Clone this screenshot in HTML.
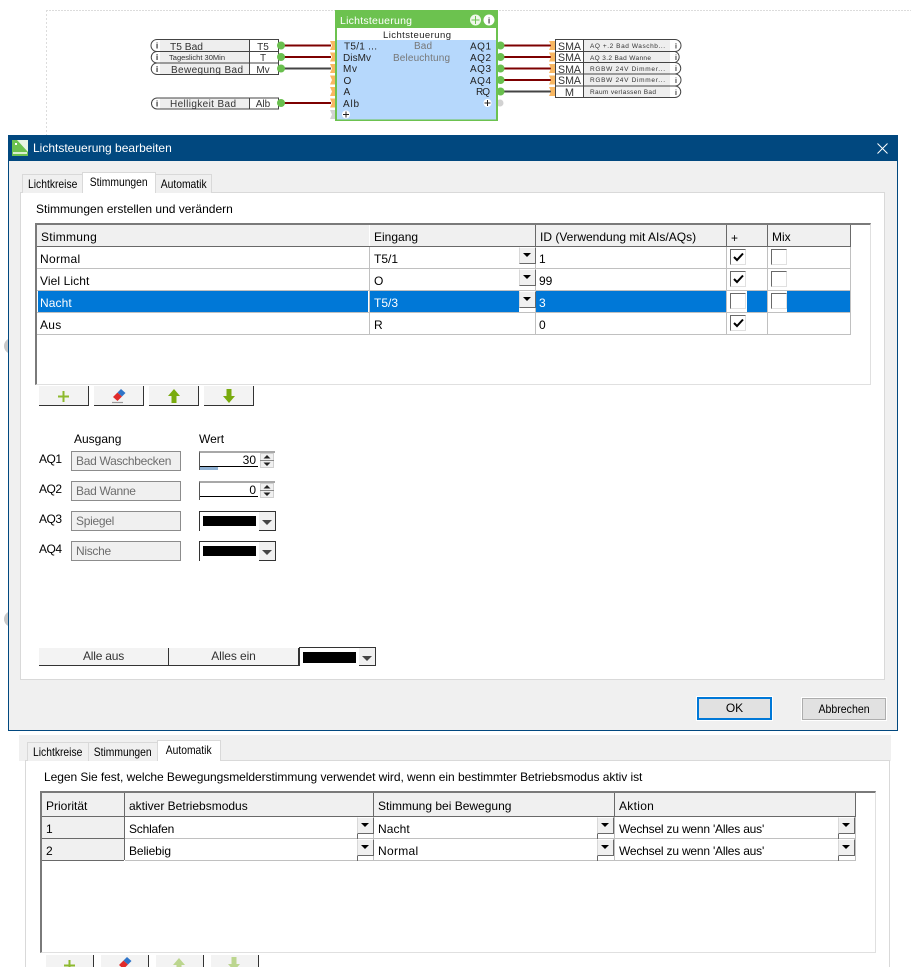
<!DOCTYPE html>
<html lang="de">
<head>
<meta charset="utf-8">
<title>Lichtsteuerung bearbeiten</title>
<style>
html,body{margin:0;padding:0;background:#fff;width:911px;height:967px;overflow:hidden}
body{position:relative;font-family:"Liberation Sans",sans-serif;font-size:12px;color:#000}
div{position:absolute;box-sizing:border-box}
.t{white-space:nowrap;line-height:14px}
.w{color:#fff}
.hd{background:#f0f0f0}
.hl{height:1px;background:#c0c0c0}
.vl{width:1px;background:#c0c0c0}
.dk{background:#696969}
.tab{background:#f0f0f0;border:1px solid #d9d9d9;border-bottom:0;text-align:center;line-height:18px;white-space:nowrap}
.tab span{display:inline-block;transform:scaleX(.86)}
.tab.on{background:#fff}
.c{width:17px;height:17px;background:#f0f0f0;border-top:1px solid #fff;border-right:1px solid #696969;border-bottom:1px solid #696969;border-left:1px solid #d8d8d8}
.c::after{content:"";position:absolute;left:3px;top:5px;border:4px solid transparent;border-top:4px solid #000;border-bottom:0}
.cb{width:16px;height:16px;background:#fff;border-top:1px solid #696969;border-left:1px solid #696969;border-right:1px solid #e0e0e0;border-bottom:1px solid #e0e0e0}
.b{height:20px;width:50px;background:#f3f3f3;border-right:1px solid #333;border-bottom:1px solid #333}
.i{width:110px;height:20px;background:#f0f0f0;border:1px solid #8c8c8c;color:#6d6d6d;line-height:18px;padding-left:4px;letter-spacing:-.3px;white-space:nowrap}
.cc{width:77px;height:20px;background:#fff;border-top:1px solid #333;border-left:1px solid #333}
.blk{background:#000}
svg{position:absolute;display:block;overflow:visible}
</style>
</head>
<body>

<!-- logic diagram -->
<svg style="left:0;top:0" width="911" height="135" viewBox="0 0 911 135" font-family="Liberation Sans, sans-serif">
  <path d="M46 10.5H911" stroke="#dcdcdc" stroke-dasharray="2 1"/>
  <path d="M46.5 10V135" stroke="#dcdcdc" stroke-dasharray="2 2"/>

  <!-- wires -->
  <g stroke="#7d0000" stroke-width="2">
    <path d="M284 45.5H331M284 57H331M284 103H331"/>
    <path d="M503 45.5H552M503 57H552M503 68.5H552M503 80H552"/>
  </g>
  <g stroke="#444" stroke-width="2"><path d="M284 68.5H331M503 91.5H552"/></g>

  <!-- input boxes -->
  <g stroke="#444" fill="#fff">
    <path d="M157 39.5H278.5V51.5H157A6 6 0 0 1 157 39.5Z"/>
    <path d="M157 51.5H278.5V63H157A5.750 5.750 0 0 1 157 51.5Z"/>
    <path d="M157 63H278.5V74.5H157A5.750 5.750 0 0 1 157 63Z"/>
    <path d="M157 98H278.5V109H157A5.500 5.500 0 0 1 157 98Z"/>
  </g>
  <g fill="#eee">
    <rect x="160" y="40" width="89" height="11"/>
    <rect x="160" y="52" width="89" height="10.500"/>
    <rect x="160" y="63.500" width="89" height="10.500"/>
    <rect x="160" y="98.500" width="89" height="10"/>
  </g>
  <path d="M249.500 39.500V74.500M249.500 98V109" stroke="#444"/>
  <g font-size="8.500" font-weight="bold" fill="#333" text-anchor="middle">
    <text x="157" y="48.500">i</text><text x="157" y="60">i</text><text x="157" y="72">i</text><text x="157" y="106.500">i</text>
  </g>
  <g font-size="10" fill="#333">
    <text x="170" y="50" textLength="33" lengthAdjust="spacingAndGlyphs">T5 Bad</text>
    <text x="169" y="60" font-size="7" textLength="56" lengthAdjust="spacingAndGlyphs">Tageslicht 30Min</text>
    <text x="171" y="73" textLength="72" lengthAdjust="spacing">Bewegung Bad</text>
    <text x="170" y="107" textLength="66" lengthAdjust="spacing">Helligkeit Bad</text>
  </g>
  <g font-size="10" fill="#333" text-anchor="middle">
    <text x="263" y="50">T5</text><text x="263" y="61">T</text><text x="263" y="73">Mv</text><text x="263" y="107">Alb</text>
  </g>
  <g fill="#69bf4e">
    <circle cx="281" cy="45.500" r="4"/><circle cx="281" cy="57" r="4"/><circle cx="281" cy="68.500" r="4"/><circle cx="281" cy="103" r="4"/>
    <circle cx="500.500" cy="45.500" r="4"/><circle cx="500.500" cy="57" r="4"/><circle cx="500.500" cy="68.500" r="4"/><circle cx="500.500" cy="80" r="4"/><circle cx="500.500" cy="91.500" r="4"/>
  </g>
  <circle cx="500" cy="103" r="3.500" fill="#d2d2d2"/>

  <!-- function block -->
  <rect x="335" y="10" width="163" height="111" fill="#6cc24f"/>
  <rect x="337" y="28" width="159" height="12" fill="#fff"/>
  <rect x="337" y="40" width="159" height="79.500" fill="#b6d8fc"/>
  <text x="340" y="24" font-size="10.500" fill="#fff" textLength="72" lengthAdjust="spacing">Lichtsteuerung</text>
  <circle cx="475.500" cy="20" r="5.500" fill="#eef7ea"/>
  <path d="M475.500 16V24M471.500 20H479.500" stroke="#6cc24f"/>
  <circle cx="489" cy="20" r="5.500" fill="#fff"/>
  <text x="489" y="23.500" font-size="8.500" font-weight="bold" fill="#444" text-anchor="middle">i</text>
  <text x="383" y="38" font-size="9.500" fill="#222" textLength="68" lengthAdjust="spacing">Lichtsteuerung</text>
  <g font-size="10" fill="#222">
    <text x="344" y="49.500" textLength="33" lengthAdjust="spacing">T5/1 ...</text>
    <text x="343" y="61" textLength="28" lengthAdjust="spacing">DisMv</text>
    <text x="343" y="72" textLength="14" lengthAdjust="spacing">Mv</text>
    <text x="343.500" y="84">O</text>
    <text x="343.500" y="95">A</text>
    <text x="343" y="107" textLength="16" lengthAdjust="spacing">Alb</text>
    <text x="470" y="49.500" textLength="21" lengthAdjust="spacing">AQ1</text>
    <text x="470" y="61" textLength="21" lengthAdjust="spacing">AQ2</text>
    <text x="470" y="72" textLength="21" lengthAdjust="spacing">AQ3</text>
    <text x="470" y="84" textLength="21" lengthAdjust="spacing">AQ4</text>
    <text x="476" y="95" textLength="14" lengthAdjust="spacing">RQ</text>
  </g>
  <g font-size="10" fill="#777">
    <text x="414" y="49" textLength="18" lengthAdjust="spacing">Bad</text>
    <text x="393" y="61" textLength="57" lengthAdjust="spacing">Beleuchtung</text>
  </g>
  <g>
    <circle cx="487.500" cy="103" r="4" fill="#fff"/><path d="M484.500 103H490.500M487.500 100V106" stroke="#222"/>
    <circle cx="346" cy="114.500" r="4" fill="#fff"/><path d="M343 114.500H349M346 111.500V117.500" stroke="#222"/>
  </g>

  <!-- orange ports -->
  <g fill="#f8b762">
    <path d="M330 41H335V50H330L332 45.500Z"/><path d="M330 52.500H335V61.500H330L332 57Z"/><path d="M330 64H335V73H330L332 68.500Z"/><path d="M330 75.500H335V84.500H330L332 80Z"/><path d="M330 87H335V96H330L332 91.500Z"/><path d="M330 98.500H335V107.500H330L332 103Z"/>
    <path d="M549 41H555V50H549L551 45.500Z"/><path d="M549 52.500H555V61.500H549L551 57Z"/><path d="M549 64H555V73H549L551 68.500Z"/><path d="M549 75.500H555V84.500H549L551 80Z"/><path d="M549 87H555V96H549L551 91.500Z"/>
  </g>
  <path d="M330 110H335V119H330L332 114.500Z" fill="#d2d2d2"/>

  <!-- output boxes -->
  <g stroke="#444" fill="#fff">
    <path d="M555.500 39.500H675A6 6 0 0 1 675 51.500H555.500Z"/>
    <path d="M555.500 51.500H675A5.700 5.700 0 0 1 675 62.500H555.500Z"/>
    <path d="M555.500 62.500H675A5.700 5.700 0 0 1 675 74H555.500Z"/>
    <path d="M555.500 74H675A5.700 5.700 0 0 1 675 86H555.500Z"/>
    <path d="M555.500 86H675A5.700 5.700 0 0 1 675 97.500H555.500Z"/>
  </g>
  <g fill="#eee">
    <rect x="584" y="40" width="86" height="11"/><rect x="584" y="52" width="86" height="10"/><rect x="584" y="63" width="86" height="10.500"/><rect x="584" y="74.500" width="86" height="11"/><rect x="584" y="86.500" width="86" height="10.500"/>
  </g>
  <path d="M583.500 39.500V97.500" stroke="#444"/>
  <g font-size="11" fill="#333">
    <text x="558" y="50" textLength="23" lengthAdjust="spacingAndGlyphs">SMA</text>
    <text x="558" y="61" textLength="23" lengthAdjust="spacingAndGlyphs">SMA</text>
    <text x="558" y="73" textLength="23" lengthAdjust="spacingAndGlyphs">SMA</text>
    <text x="558" y="84" textLength="23" lengthAdjust="spacingAndGlyphs">SMA</text>
    <text x="569.500" y="96" text-anchor="middle">M</text>
  </g>
  <g font-size="6.500" fill="#333">
    <text x="590" y="48" textLength="75" lengthAdjust="spacing">AQ +.2 Bad Waschb...</text>
    <text x="590" y="60" textLength="61" lengthAdjust="spacing">AQ 3.2 Bad Wanne</text>
    <text x="590" y="71" textLength="75" lengthAdjust="spacing">RGBW 24V Dimmer...</text>
    <text x="590" y="82" textLength="75" lengthAdjust="spacing">RGBW 24V Dimmer...</text>
    <text x="590" y="94" textLength="66" lengthAdjust="spacing">Raum verlassen Bad</text>
  </g>
  <g font-size="7" font-weight="bold" fill="#333" text-anchor="middle">
    <text x="676" y="48.500">i</text><text x="676" y="60">i</text><text x="676" y="71">i</text><text x="676" y="83">i</text><text x="676" y="95">i</text>
  </g>
</svg>

<!-- grey stubs behind dialog -->
<div style="left:4px;top:338px;width:8px;height:16px;border-radius:8px 0 0 8px;background:#c8c8c8"></div>
<div style="left:4px;top:611px;width:8px;height:16px;border-radius:8px 0 0 8px;background:#c8c8c8"></div>

<!-- dialog -->
<div style="left:8px;top:135px;width:890px;height:596px;background:#f0f0f0;border:1px solid #01487f"></div>
<div style="left:8px;top:135px;width:890px;height:26px;background:#01487f"></div>
<svg style="left:12px;top:140px" width="16" height="16" viewBox="0 0 16 16">
  <rect width="16" height="16" fill="#6cc24f"/>
  <path d="M5 0H16V12Z" fill="#e9f5e3"/>
  <rect x="3" y="3" width="2" height="2" fill="#fff"/>
  <rect x="1" y="12" width="14" height="2" fill="#d8efcf"/>
</svg>
<div class="t w" style="left:33px;top:141px">Lichtsteuerung bearbeiten</div>
<svg style="left:877px;top:143px" width="11" height="11" viewBox="0 0 11 11"><path d="M.5 .5L10.500 10.500M10.500 .5L.5 10.500" stroke="#fff" stroke-width="1"/></svg>

<!-- tab page -->
<div style="left:20px;top:192px;width:865px;height:488px;background:#fff;border:1px solid #d9d9d9"></div>
<div class="tab" style="left:22px;top:174px;width:61px;height:19px"><span>Lichtkreise</span></div>
<div class="tab on" style="left:82px;top:172px;width:74px;height:21px;line-height:19px"><span>Stimmungen</span></div>
<div class="tab" style="left:155px;top:174px;width:57px;height:19px"><span>Automatik</span></div>
<div class="t" style="left:36px;top:202px">Stimmungen erstellen und verändern</div>

<!-- table 1 -->
<div style="left:35px;top:223px;width:836px;height:162px;background:#fff;border-top:2px solid #7a7a7a;border-left:2px solid #7a7a7a;border-right:1px solid #e0e0e0;border-bottom:1px solid #e0e0e0"></div>
<div class="hd" style="left:37px;top:225px;width:814px;height:21px"></div>
<div class="dk" style="left:37px;top:246px;width:814px;height:1px"></div>
<div class="vl" style="left:369px;top:225px;height:21px;background:#fff"></div>
<div class="dk" style="left:535px;top:225px;width:1px;height:21px"></div>
<div class="dk" style="left:726px;top:225px;width:1px;height:21px"></div>
<div class="dk" style="left:767px;top:225px;width:1px;height:21px"></div>
<div class="dk" style="left:850px;top:225px;width:1px;height:21px"></div>
<div class="t" style="left:41px;top:230px;letter-spacing:.25px">Stimmung</div>
<div class="t" style="left:374px;top:230px">Eingang</div>
<div class="t" style="left:540px;top:230px">ID (Verwendung mit AIs/AQs)</div>
<div class="t" style="left:731px;top:231px">+</div>
<div class="t" style="left:772px;top:230px">Mix</div>

<!-- selected row -->
<div style="left:38px;top:291px;width:330px;height:21px;background:#0078d7"></div>
<div style="left:370px;top:291px;width:149px;height:21px;background:#0078d7"></div>
<div style="left:536px;top:291px;width:190px;height:21px;background:#0078d7"></div>
<div style="left:747px;top:291px;width:20px;height:21px;background:#0078d7"></div>
<div style="left:787px;top:291px;width:63px;height:21px;background:#0078d7"></div>

<!-- grid lines -->
<div class="hl" style="left:37px;top:268px;width:814px"></div>
<div class="hl" style="left:37px;top:290px;width:814px"></div>
<div class="hl" style="left:37px;top:312px;width:814px"></div>
<div class="hl" style="left:37px;top:334px;width:814px"></div>
<div class="vl" style="left:369px;top:247px;height:88px"></div>
<div class="vl" style="left:535px;top:247px;height:88px"></div>
<div class="vl" style="left:726px;top:247px;height:88px"></div>
<div class="vl" style="left:767px;top:247px;height:88px"></div>
<div class="vl" style="left:850px;top:247px;height:88px"></div>

<div class="t" style="left:40px;top:252px;letter-spacing:.3px">Normal</div>
<div class="t" style="left:40px;top:274px;letter-spacing:.1px">Viel Licht</div>
<div class="t w" style="left:40px;top:296px;letter-spacing:.1px">Nacht</div>
<div class="t" style="left:40px;top:318px;letter-spacing:.3px">Aus</div>
<div class="t" style="left:374px;top:252px">T5/1</div>
<div class="t" style="left:374px;top:274px">O</div>
<div class="t w" style="left:374px;top:296px">T5/3</div>
<div class="t" style="left:374px;top:318px">R</div>
<div class="t" style="left:539px;top:252px">1</div>
<div class="t" style="left:539px;top:274px">99</div>
<div class="t w" style="left:539px;top:296px">3</div>
<div class="t" style="left:539px;top:318px">0</div>

<div class="c" style="left:519px;top:247px"></div>
<div class="c" style="left:519px;top:269px"></div>
<div class="c" style="left:519px;top:291px"></div>

<div class="cb" style="left:730px;top:249px"><svg style="left:2px;top:2px" width="11" height="11" viewBox="0 0 11 11"><path d="M1 5L4 8L10 1.500" fill="none" stroke="#000" stroke-width="2"/></svg></div>
<div class="cb" style="left:730px;top:271px"><svg style="left:2px;top:2px" width="11" height="11" viewBox="0 0 11 11"><path d="M1 5L4 8L10 1.500" fill="none" stroke="#000" stroke-width="2"/></svg></div>
<div class="cb" style="left:730px;top:293px"></div>
<div class="cb" style="left:730px;top:315px"><svg style="left:2px;top:2px" width="11" height="11" viewBox="0 0 11 11"><path d="M1 5L4 8L10 1.500" fill="none" stroke="#000" stroke-width="2"/></svg></div>
<div class="cb" style="left:771px;top:249px"></div>
<div class="cb" style="left:771px;top:271px"></div>
<div class="cb" style="left:771px;top:293px"></div>

<!-- toolbar -->
<div class="b" style="left:39px;top:386px"><svg style="left:19px;top:5px" width="11" height="11" viewBox="0 0 11 11"><path d="M5.500 0V11M0 5.500H11" stroke="#8db92e" stroke-width="2"/></svg></div>
<div class="b" style="left:94px;top:386px"><svg style="left:17px;top:2px" width="16" height="16" viewBox="0 0 16 16"><path d="M2 9L6.500 4.500L11 8.500L6.500 13Z" fill="#e02b2b"/><path d="M6.500 4.500L10 1L14.500 5L11 8.500Z" fill="#2f74c8"/><path d="M1 14.500H12" stroke="#9a9a9a" stroke-width="1.200"/></svg></div>
<div class="b" style="left:149px;top:386px"><svg style="left:19px;top:3px" width="12" height="14" viewBox="0 0 12 14"><path d="M6 0L12 7H8.500V14H3.500V7H0Z" fill="#79ab0e"/></svg></div>
<div class="b" style="left:204px;top:386px"><svg style="left:19px;top:3px" width="12" height="14" viewBox="0 0 12 14"><path d="M6 14L12 7H8.500V0H3.500V7H0Z" fill="#79ab0e"/></svg></div>

<!-- outputs -->
<div class="t" style="left:74px;top:432px">Ausgang</div>
<div class="t" style="left:199px;top:432px">Wert</div>
<div class="t" style="left:39px;top:452px;letter-spacing:-.5px">AQ1</div>
<div class="t" style="left:39px;top:482px;letter-spacing:-.5px">AQ2</div>
<div class="t" style="left:39px;top:512px;letter-spacing:-.5px">AQ3</div>
<div class="t" style="left:39px;top:542px;letter-spacing:-.5px">AQ4</div>
<div class="i" style="left:71px;top:451px">Bad Waschbecken</div>
<div class="i" style="left:71px;top:481px">Bad Wanne</div>
<div class="i" style="left:71px;top:511px">Spiegel</div>
<div class="i" style="left:71px;top:541px">Nische</div>

<!-- spinners -->
<div style="left:199px;top:451px;width:76px;height:19px;background:#fff;border-top:2px solid #a8a8a8;border-left:1px solid #555"></div>
<div style="left:200px;top:466px;width:58px;height:1px;background:#000"></div>
<div style="left:200px;top:467px;width:18px;height:3px;background:#8fb1d3"></div>
<div class="t" style="left:230px;top:453px;width:26px;text-align:right">30</div>
<div style="left:260px;top:453px;width:14px;height:15px;background:#f0f0f0;border:1px solid #d0d0d0"></div>
<div style="left:260px;top:460px;width:14px;height:1px;background:#888"></div>
<svg style="left:263px;top:455px" width="8" height="11" viewBox="0 0 8 11"><path d="M4 0L7.500 3.500H.5ZM4 11L7.500 7.500H.5Z" fill="#222"/></svg>

<div style="left:199px;top:481px;width:76px;height:19px;background:#fff;border-top:2px solid #a8a8a8;border-left:1px solid #555"></div>
<div style="left:200px;top:496px;width:58px;height:1px;background:#000"></div>
<div class="t" style="left:230px;top:483px;width:26px;text-align:right">0</div>
<div style="left:260px;top:483px;width:14px;height:15px;background:#f0f0f0;border:1px solid #d0d0d0"></div>
<div style="left:260px;top:490px;width:14px;height:1px;background:#888"></div>
<svg style="left:263px;top:485px" width="8" height="11" viewBox="0 0 8 11"><path d="M4 0L7.500 3.500H.5ZM4 11L7.500 7.500H.5Z" fill="#222"/></svg>

<!-- colour combos -->
<div class="cc" style="left:199px;top:511px"></div>
<div class="blk" style="left:203px;top:516px;width:53px;height:10px"></div>
<div style="left:259px;top:512px;width:17px;height:19px;background:#f0f0f0;border-right:1px solid #333;border-bottom:1px solid #333"></div>
<svg style="left:262px;top:520px" width="10" height="5"><path d="M0 0H10L5 5Z" fill="#444"/></svg>
<div class="cc" style="left:199px;top:541px"></div>
<div class="blk" style="left:203px;top:546px;width:53px;height:10px"></div>
<div style="left:259px;top:542px;width:17px;height:19px;background:#f0f0f0;border-right:1px solid #333;border-bottom:1px solid #333"></div>
<svg style="left:262px;top:550px" width="10" height="5"><path d="M0 0H10L5 5Z" fill="#444"/></svg>

<!-- Alle aus / ein -->
<div style="left:39px;top:648px;width:130px;height:18px;background:#f3f3f3;border-right:1px solid #333;border-bottom:1px solid #333"></div>
<div style="left:169px;top:648px;width:130px;height:18px;background:#f3f3f3;border-right:1px solid #333;border-bottom:1px solid #333"></div>
<div class="t" style="left:39px;top:649px;width:129px;text-align:center;letter-spacing:-.2px;color:#333">Alle aus</div>
<div class="t" style="left:169px;top:649px;width:129px;text-align:center;letter-spacing:-.1px;color:#333">Alles ein</div>
<div class="cc" style="left:299px;top:647px;height:19px"></div>
<div class="blk" style="left:303px;top:652px;width:53px;height:11px"></div>
<div style="left:359px;top:648px;width:17px;height:18px;background:#f0f0f0;border-right:1px solid #333;border-bottom:1px solid #333"></div>
<svg style="left:362px;top:656px" width="10" height="5"><path d="M0 0H10L5 5Z" fill="#444"/></svg>

<!-- dialog buttons -->
<div style="left:697px;top:697px;width:75px;height:23px;background:#e1e1e1;border:2px solid #0078d7;outline:1px solid #fff;text-align:center;line-height:19px">OK</div>
<div style="left:802px;top:698px;width:84px;height:22px;background:#e1e1e1;border:1px solid #adadad;outline:1px solid #fff;text-align:center;line-height:20px;white-space:nowrap"><span style="display:inline-block;transform:scaleX(.88)">Abbrechen</span></div>

<!-- second screenshot -->
<div style="left:19px;top:735px;width:872px;height:26px;background:#f0f0f0"></div>
<div style="left:25px;top:760px;width:865px;height:207px;background:#fff;border:1px solid #d9d9d9;border-bottom:0"></div>
<div class="tab" style="left:27px;top:742px;width:62px;height:19px"><span>Lichtkreise</span></div>
<div class="tab" style="left:88px;top:742px;width:70px;height:19px"><span>Stimmungen</span></div>
<div class="tab on" style="left:157px;top:740px;width:64px;height:21px;line-height:19px"><span>Automatik</span></div>
<div class="t" style="left:44px;top:770px;letter-spacing:-.05px">Legen Sie fest, welche Bewegungsmelderstimmung verwendet wird, wenn ein bestimmter Betriebsmodus aktiv ist</div>

<div style="left:40px;top:791px;width:836px;height:162px;background:#fff;border-top:2px solid #7a7a7a;border-left:2px solid #7a7a7a;border-right:1px solid #e0e0e0;border-bottom:1px solid #e0e0e0"></div>
<div class="hd" style="left:42px;top:793px;width:814px;height:23px"></div>
<div class="dk" style="left:42px;top:816px;width:814px;height:1px"></div>
<div class="hd" style="left:42px;top:817px;width:82px;height:43px"></div>
<div class="dk" style="left:124px;top:793px;width:1px;height:67px"></div>
<div class="dk" style="left:373px;top:793px;width:1px;height:23px"></div>
<div class="dk" style="left:614px;top:793px;width:1px;height:23px"></div>
<div class="dk" style="left:855px;top:793px;width:1px;height:23px"></div>
<div class="dk" style="left:42px;top:838px;width:82px;height:1px"></div>
<div class="dk" style="left:42px;top:860px;width:82px;height:1px"></div>
<div class="hl" style="left:125px;top:838px;width:731px"></div>
<div class="hl" style="left:125px;top:860px;width:731px"></div>
<div class="vl" style="left:373px;top:817px;height:44px"></div>
<div class="vl" style="left:614px;top:817px;height:44px"></div>
<div class="vl" style="left:855px;top:817px;height:44px"></div>
<div class="dk" style="left:357px;top:817px;width:1px;height:44px"></div>
<div class="dk" style="left:597px;top:817px;width:1px;height:44px"></div>
<div class="dk" style="left:838px;top:817px;width:1px;height:44px"></div>

<div class="t" style="left:46px;top:799px">Priorität</div>
<div class="t" style="left:129px;top:799px">aktiver Betriebsmodus</div>
<div class="t" style="left:378px;top:799px">Stimmung bei Bewegung</div>
<div class="t" style="left:619px;top:799px;letter-spacing:.3px">Aktion</div>
<div class="t" style="left:46px;top:822px">1</div>
<div class="t" style="left:46px;top:844px">2</div>
<div class="t" style="left:129px;top:822px;letter-spacing:-.2px">Schlafen</div>
<div class="t" style="left:129px;top:844px;letter-spacing:-.1px">Beliebig</div>
<div class="t" style="left:378px;top:822px;letter-spacing:.1px">Nacht</div>
<div class="t" style="left:378px;top:844px;letter-spacing:.3px">Normal</div>
<div class="t" style="left:619px;top:822px;letter-spacing:-.2px">Wechsel zu wenn 'Alles aus'</div>
<div class="t" style="left:619px;top:844px;letter-spacing:-.2px">Wechsel zu wenn 'Alles aus'</div>

<div class="c" style="left:357px;top:817px"></div>
<div class="c" style="left:357px;top:839px"></div>
<div class="c" style="left:597px;top:817px"></div>
<div class="c" style="left:597px;top:839px"></div>
<div class="c" style="left:838px;top:817px"></div>
<div class="c" style="left:838px;top:839px"></div>

<div class="b" style="left:46px;top:955px;width:48px;height:12px;border-bottom:0"><svg style="left:18px;top:5px" width="11" height="11" viewBox="0 0 11 11"><path d="M5.500 0V11M0 5.500H11" stroke="#8db92e" stroke-width="2"/></svg></div>
<div class="b" style="left:101px;top:955px;width:48px;height:12px;border-bottom:0"><svg style="left:16px;top:1px" width="16" height="16" viewBox="0 0 16 16"><path d="M2 9L6.500 4.500L11 8.500L6.500 13Z" fill="#e02b2b"/><path d="M6.500 4.500L10 1L14.500 5L11 8.500Z" fill="#2f74c8"/></svg></div>
<div class="b" style="left:156px;top:955px;width:48px;height:12px;border-bottom:0"><svg style="left:17px;top:3px" width="12" height="14" viewBox="0 0 12 14"><path d="M6 0L12 7H8.500V14H3.500V7H0Z" fill="#bcd68f"/></svg></div>
<div class="b" style="left:211px;top:955px;width:48px;height:12px;border-bottom:0"><svg style="left:17px;top:2px" width="12" height="14" viewBox="0 0 12 14"><path d="M6 14L12 7H8.500V0H3.500V7H0Z" fill="#bcd68f"/></svg></div>

</body>
</html>
